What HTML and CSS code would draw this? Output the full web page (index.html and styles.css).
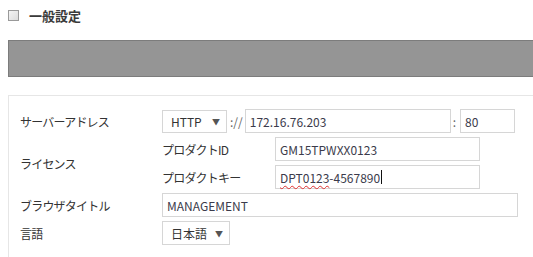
FILE: index.html
```html
<!DOCTYPE html>
<html lang="ja">
<head>
    <meta charset="UTF-8">
    <title>一般設定</title>
    <link rel="stylesheet" href="styles.css">
</head>
<body>
    <div class="section-head">
        <span class="check"></span>
        <span class="section-title">一般設定</span>
    </div>

    <div class="bar"></div>

    <div class="panel">
        <div class="label">サーバーアドレス</div>
        <div class="row">
            <div class="select select-proto">HTTP <span class="arrow">▼</span></div>
            <span class="sep">://</span>
            <input class="field field-host" type="text" value="172.16.76.203">
            <span class="sep sep-colon">:</span>
            <input class="field field-port" type="text" value="80">
        </div>

        <div class="label label-license">ライセンス</div>
        <div class="license">
            <div class="sublabel">プロダクトID</div>
            <input class="field field-license" type="text" value="GM15TPWXX0123">
            <div class="sublabel">プロダクトキー</div>
            <div class="field field-license field-active"><span class="misspelled">DPT0123</span>-4567890<span class="caret"></span></div>
        </div>

        <div class="label">ブラウザタイトル</div>
        <div class="row">
            <input class="field field-title" type="text" value="MANAGEMENT">
        </div>

        <div class="label">言語</div>
        <div class="row">
            <div class="select select-lang">日本語 <span class="arrow">▼</span></div>
        </div>
    </div>
</body>
</html>
```

FILE: styles.css
```css
html {
    overflow: hidden;
}

body {
    margin: 0;
    padding: 8px 0 8px 8px;
    font-family: "Noto Sans CJK JP", "Noto Sans", sans-serif;
    font-size: 12px;
    color: #333;
    background: #fff;
}

.section-head {
    display: flex;
    align-items: center;
    height: 14px;
    margin-bottom: 18px;
}

.check {
    width: 9px;
    height: 9px;
    border: 1px solid #9a9a9a;
    background: linear-gradient(135deg, #f4f4f4, #dcdcdc);
    margin-right: 10px;
}

.section-title {
    font-size: 13px;
    font-weight: bold;
    color: #3a3a3a;
}

.bar {
    height: 35px;
    background-color: #959595;
    border: 1px solid #7c7c7c;
    border-right: none;
    margin-bottom: 18px;
}

.panel {
    display: grid;
    grid-template-columns: 142px 1fr;
    row-gap: 4px;
    align-items: center;
    padding: 13px 0 12px 11px;
    border: 1px solid #e6e6e6;
    border-right: none;
}

.label {
    font-size: 12px;
    letter-spacing: -0.8px;
}

.row {
    display: flex;
    align-items: center;
}

.sep {
    color: #666;
    margin: 0 2px 0 3px;
}

.sep-colon {
    margin: 0 4px 0 2px;
}

.field {
    box-sizing: border-box;
    height: 24px;
    padding: 0 4px;
    border: 1px solid #d6d6d6;
    font-family: "Noto Sans CJK JP", "Noto Sans", sans-serif;
    font-size: 12px;
    color: #3b3b4b;
    background: #fff;
    outline: none;
}

div.field {
    display: flex;
    align-items: center;
}

.field-host {
    width: 206px;
}

.field-port {
    width: 55px;
}

.field-license {
    width: 205px;
}

.field-title {
    width: 356px;
}

.select {
    box-sizing: border-box;
    display: flex;
    align-items: center;
    justify-content: space-between;
    height: 23px;
    padding: 0 6px 0 8px;
    border: 1px solid #d6d6d6;
    background: #fff;
}

.select-proto {
    width: 65px;
}

.select-lang {
    width: 68px;
    height: 24px;
}

.arrow {
    font-size: 8px;
    color: #555;
}

.license {
    display: grid;
    grid-template-columns: 113px 1fr;
    row-gap: 4px;
    align-items: center;
}

.sublabel {
    letter-spacing: -0.8px;
}

.misspelled {
    text-decoration: underline wavy #e03030;
    text-decoration-thickness: 1px;
    text-underline-offset: 2px;
}

.caret {
    display: inline-block;
    width: 1px;
    height: 14px;
    background: #111;
    margin-left: 1px;
}
```
